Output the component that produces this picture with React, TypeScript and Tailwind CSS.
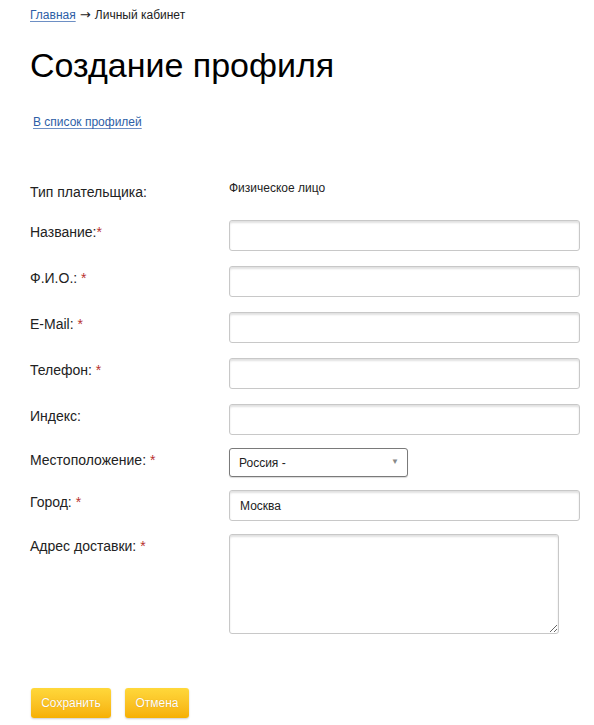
import React from 'react';

const Req = () => <span className="text-[#b8312f]"> *</span>;

const inputCls =
  'block h-[31px] w-[351px] shrink-0 rounded-[3px] border border-[#c8c8c8] bg-white px-[10px] text-[12px] text-[#222] shadow-[inset_0_2px_2px_rgba(0,0,0,0.12)] outline-none';

const Row = ({ label, req, tight, children, mb }: { label: string; req?: boolean; tight?: boolean; children: React.ReactNode; mb: string }) => (
  <div className={`flex ${mb}`}>
    <div className="w-[199px] shrink-0 pt-[2px] text-[14px] leading-[20px] text-[#222]">
      {label}
      {req && (tight ? <span className="text-[#b8312f]">*</span> : <Req />)}
    </div>
    {children}
  </div>
);

const App = () => {
  return (
    <div className="min-h-screen bg-white pl-[30px] pr-[10px] pt-[6px] font-['Liberation_Sans',Arial,sans-serif]">
      <div className="text-[12px] leading-[18px] text-[#222]">
        <a href="#" className="text-[#2d5ea6] underline underline-offset-2 decoration-[#6d8fc4]">Главная</a>
        <span className="font-['DejaVu_Sans',sans-serif] text-[13px]"> → </span>
        <span>Личный кабинет</span>
      </div>

      <h1 className="mt-[21px] text-[34px] font-normal leading-[40px] text-black">Создание профиля</h1>

      <div className="mt-[29px] pl-[3px] text-[12px] leading-[16px]">
        <a href="#" className="text-[#2d5ea6] underline underline-offset-2 decoration-[#6d8fc4]">В список профилей</a>
      </div>

      <div className="mt-[49px]">
        <div className="mb-[18px] flex">
          <div className="w-[199px] shrink-0 pt-[3px] text-[14px] leading-[20px] text-[#222]">Тип плательщика:</div>
          <div className="text-[12px] leading-[18px] text-[#222]">Физическое лицо</div>
        </div>

        <Row label="Название:" req tight mb="mb-[15px]">
          <input className={inputCls} />
        </Row>
        <Row label="Ф.И.О.:" req mb="mb-[15px]">
          <input className={inputCls} />
        </Row>
        <Row label="E-Mail:" req mb="mb-[15px]">
          <input className={inputCls} />
        </Row>
        <Row label="Телефон:" req mb="mb-[15px]">
          <input className={inputCls} />
        </Row>
        <Row label="Индекс:" mb="mb-[13px]">
          <input className={inputCls} />
        </Row>
        <Row label="Местоположение:" req mb="mb-[13px]">
          <div className="relative flex h-[29px] w-[179px] shrink-0 items-center rounded-[3px] border border-[#7a7a7a] bg-white pl-[9px] text-[12px] text-[#222] shadow-[0_1px_1px_rgba(0,0,0,0.15)]">
            Россия -
            <span className="absolute right-[8px] top-[9px] text-[8px] leading-none text-[#888]">▼</span>
          </div>
        </Row>
        <Row label="Город:" req mb="mb-[13px]">
          <input className={inputCls} defaultValue="Москва" />
        </Row>
        <Row label="Адрес доставки:" req mb="mb-[54px]">
          <textarea className="block h-[100px] w-[330px] shrink-0 resize rounded-[3px] border border-[#c8c8c8] bg-white shadow-[inset_0_2px_2px_rgba(0,0,0,0.12)] outline-none" />
        </Row>

        <div className="flex gap-[14px] pl-[1px]">
          <button className="h-[30px] w-[80px] rounded-[3px] bg-gradient-to-b from-[#ffd83a] to-[#f6b000] text-[12px] text-white shadow-[0_1px_2px_rgba(0,0,0,0.2)] [text-shadow:0_0_1px_rgba(180,110,0,0.5)]">
            Сохранить
          </button>
          <button className="h-[30px] w-[64px] rounded-[3px] bg-gradient-to-b from-[#ffd83a] to-[#f6b000] text-[12px] text-white shadow-[0_1px_2px_rgba(0,0,0,0.2)] [text-shadow:0_0_1px_rgba(180,110,0,0.5)]">
            Отмена
          </button>
        </div>
      </div>
    </div>
  );
};

export default App;
